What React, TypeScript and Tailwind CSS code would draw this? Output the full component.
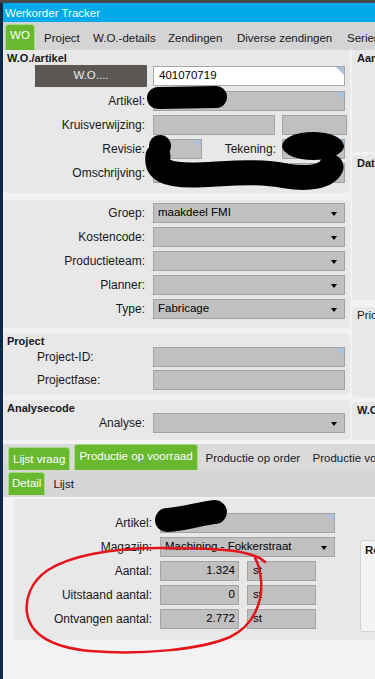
type BoxProps = {
  className?: string;
  value?: string;
  corner?: boolean;
  white?: boolean;
  right?: boolean;
};

function Box({ className = "", value, corner, white, right }: BoxProps) {
  return (
    <div
      className={`relative flex h-[20px] shrink-0 items-center overflow-hidden border ${
        white ? "border-[#a9a9a9] bg-white pl-[5px]" : "border-[#a3a3a3] bg-[#c0c0c0] pl-[5px]"
      } ${right ? "justify-end pr-[3px]" : ""} ${className}`}
    >
      {value && <span className="text-black">{value}</span>}
      {corner && (
        <span className="absolute right-0 top-0 h-0 w-0 border-l-[8px] border-t-[8px] border-l-transparent border-t-[#a9c1de]" />
      )}
    </div>
  );
}

function Select({ value, className = "" }: { value?: string; className?: string }) {
  return (
    <div
      className={`flex h-[20px] shrink-0 items-center justify-between border border-[#a3a3a3] bg-[#c0c0c0] pl-[4px] pr-[7px] ${className}`}
    >
      <span className="text-black">{value}</span>
      <span className="mt-[2px] h-0 w-0 border-x-[3px] border-t-[4px] border-x-transparent border-t-black" />
    </div>
  );
}

function Row({
  label,
  left,
  labelWidth = "w-[150px]",
  children,
}: {
  label: string;
  left?: boolean;
  labelWidth?: string;
  children: React.ReactNode;
}) {
  return (
    <div className="flex h-[20px] items-center">
      <div
        className={`${labelWidth} shrink-0 text-[12px] ${left ? "pl-[34px] text-left" : "pr-[8px] text-right"}`}
      >
        {label}
      </div>
      {children}
    </div>
  );
}

function SidePanel({ title, height, bold = true }: { title: string; height: string; bold?: boolean }) {
  return (
    <div className={`${height} shrink-0 overflow-hidden rounded-[4px] bg-[#e8e8e8] pl-[5px] pt-[3px]`}>
      <span className={bold ? "text-[11px] font-bold" : ""}>{title}</span>
    </div>
  );
}

export default function App() {
  return (
    <div className="relative h-[679px] w-[375px] overflow-hidden bg-[#46494c] pt-[3px] font-['Liberation_Sans',Arial,sans-serif] text-[11.5px] leading-none text-[#17171f]">
      <div className="flex h-full flex-col border-l-[3px] border-[#0c2a45] bg-[#f2f2f4]">
        {/* title bar */}
        <div className="flex h-[19px] shrink-0 items-center bg-[#00a9ea] pl-[2px] pt-[2px] text-white">
          Werkorder Tracker
        </div>

        {/* main tabs */}
        <div className="flex h-[28px] shrink-0 items-end overflow-hidden whitespace-nowrap bg-[#d4d4d4] pl-[2px]">
          <div className="flex h-[26px] w-[30px] shrink-0 items-center justify-center rounded-t-[4px] border border-b-0 border-[#a6d98a] bg-[#68b92e] pb-[3px] text-white">
            WO
          </div>
          <div className="ml-[9px] flex h-[26px] w-[49px] shrink-0 items-center pt-[3px]">Project</div>
          <div className="flex h-[26px] w-[75px] shrink-0 items-center pt-[3px]">W.O.-details</div>
          <div className="flex h-[26px] w-[69px] shrink-0 items-center pt-[3px]">Zendingen</div>
          <div className="flex h-[26px] w-[110px] shrink-0 items-center pt-[3px]">Diverse zendingen</div>
          <div className="flex h-[26px] shrink-0 items-center pt-[3px]">Serienummers</div>
        </div>

        {/* upper section */}
        <div className="flex shrink-0 gap-[2px] whitespace-nowrap">
          <div className="flex w-[347px] shrink-0 flex-col">
            {/* W.O./artikel */}
            <div className="h-[143px] rounded-[4px] bg-[#e8e8e8] pt-[2px]">
              <div className="h-[13px] pl-[4px] pt-[1px] text-[11px] font-bold">W.O./artikel</div>
              <div className="flex flex-col gap-[4px]">
                <div className="flex h-[22px] items-center">
                  <div className="ml-[32px] flex h-[22px] w-[112px] items-center justify-center bg-[#5a5755] text-[#ececec]">
                    W.O....
                  </div>
                  <Box white corner value="401070719" className="ml-[6px] w-[192px]" />
                </div>
                <Row label="Artikel:">
                  <Box corner className="w-[192px]" />
                </Row>
                <Row label="Kruisverwijzing:">
                  <Box className="w-[122px]" />
                  <Box className="ml-[7px] w-[65px]" />
                </Row>
                <Row label="Revisie:">
                  <Box corner className="w-[49px]" />
                  <div className="w-[80px] pr-[6px] text-right text-[12px]">Tekening:</div>
                  <Box corner className="w-[63px]" />
                </Row>
                <Row label="Omschrijving:">
                  <Box corner className="w-[192px]" />
                </Row>
              </div>
            </div>

            {/* Groep etc */}
            <div className="mt-[7px] flex h-[128px] flex-col gap-[4px] rounded-[4px] bg-[#e8e8e8] pt-[3px]">
              <Row label="Groep:">
                <Select value="maakdeel FMI" className="w-[192px]" />
              </Row>
              <Row label="Kostencode:">
                <Select className="w-[192px]" />
              </Row>
              <Row label="Productieteam:">
                <Select className="w-[192px]" />
              </Row>
              <Row label="Planner:">
                <Select className="w-[192px]" />
              </Row>
              <Row label="Type:">
                <Select value="Fabricage" className="w-[192px]" />
              </Row>
            </div>

            {/* Project */}
            <div className="mt-[5px] flex h-[62px] flex-col rounded-[4px] bg-[#e8e8e8] pt-[1px]">
              <div className="h-[13px] pl-[4px] pt-[2px] text-[11px] font-bold">Project</div>
              <div className="flex flex-col gap-[3px]">
                <Row label="Project-ID:" left>
                  <Box corner className="w-[192px]" />
                </Row>
                <Row label="Projectfase:" left>
                  <Box className="w-[192px]" />
                </Row>
              </div>
            </div>

            {/* Analysecode */}
            <div className="mt-[5px] flex h-[40px] flex-col rounded-[4px] bg-[#e8e8e8] pt-[3px]">
              <div className="h-[10px] pl-[4px] text-[11px] font-bold">Analysecode</div>
              <Row label="Analyse:">
                <Select className="w-[192px]" />
              </Row>
            </div>
          </div>

          <div className="flex w-[60px] shrink-0 flex-col">
            <SidePanel title="Aantallen" height="h-[102px]" />
            <div className="mt-[3px]">
              <SidePanel title="Datums" height="h-[145px]" />
            </div>
            <div className="mt-[7px]">
              <SidePanel title="Prioriteit" height="h-[90px]" bold={false} />
            </div>
            <div className="mt-[5px]">
              <SidePanel title="W.O.-status" height="h-[38px]" />
            </div>
          </div>
        </div>

        {/* lower tabs */}
        <div className="mt-[4px] flex h-[26px] shrink-0 items-end overflow-hidden whitespace-nowrap bg-[#dadada] pl-[5px]">
          <div className="flex h-[23px] shrink-0 items-center rounded-t-[3px] border border-b-0 border-[#a6d98a] bg-[#68b92e] px-[4px] pt-[1px] text-white">
            Lijst vraag
          </div>
          <div className="ml-[4px] flex h-[26px] shrink-0 items-center rounded-t-[3px] border border-b-0 border-[#a6d98a] bg-[#68b92e] px-[4px] pb-[2px] text-white">
            Productie op voorraad
          </div>
          <div className="ml-[8px] flex h-[24px] w-[107px] shrink-0 items-center pt-[1px]">Productie op order</div>
          <div className="flex h-[24px] shrink-0 items-center pt-[1px]">Productie voorraad</div>
        </div>

        <div className="flex h-[27px] shrink-0 items-end whitespace-nowrap bg-[#d6d6d6] pb-[2px] pl-[5px]">
          <div className="flex h-[23px] shrink-0 items-center rounded-t-[3px] border border-b-0 border-[#a6d98a] bg-[#68b92e] px-[3px] text-white">
            Detail
          </div>
          <div className="ml-[8px] flex h-[23px] items-center pt-[2px]">Lijst</div>
        </div>

        {/* detail content */}
        <div className="ml-[11px] mt-[2px] flex h-[141px] shrink-0 whitespace-nowrap rounded-bl-[4px] rounded-tl-[4px] bg-[#e8e8e8]">
          <div className="flex w-[346px] shrink-0 flex-col gap-[4px] pt-[14px]">
            <Row label="Artikel:" labelWidth="w-[146px]">
              <Box corner className="w-[175px]" />
            </Row>
            <Row label="Magazijn:" labelWidth="w-[146px]">
              <Select value="Machining - Fokkerstraat" className="w-[175px]" />
            </Row>
            <Row label="Aantal:" labelWidth="w-[146px]">
              <Box right value="1.324" className="w-[79px]" />
              <Box value="st" className="ml-[8px] w-[69px]" />
            </Row>
            <Row label="Uitstaand aantal:" labelWidth="w-[146px]">
              <Box right value="0" className="w-[79px]" />
              <Box value="st" className="ml-[8px] w-[69px]" />
            </Row>
            <Row label="Ontvangen aantal:" labelWidth="w-[146px]">
              <Box right value="2.772" className="w-[79px]" />
              <Box value="st" className="ml-[8px] w-[69px]" />
            </Row>
          </div>
          <div className="mt-[41px] h-[92px] w-[60px] shrink-0 overflow-hidden rounded-[3px] border border-[#d2d2d2] bg-[#f4f4f4] pl-[4px] pt-[4px] font-bold">
            Reserveringen
          </div>
        </div>
      </div>

      {/* redactions and annotation drawn over the screenshot */}
      <svg
        className="pointer-events-none absolute inset-0"
        width="375"
        height="679"
        viewBox="0 0 375 679"
        fill="none"
        strokeLinecap="round"
        strokeLinejoin="round"
      >
        <path d="M158 98 L216 97" stroke="#000" strokeWidth="22" />
        <circle cx="160" cy="146" r="11" fill="#000" />
        <path
          d="M158 156 C156 170 166 175 192 175 C226 174 256 170 286 176 C309 180 327 176 331 167"
          stroke="#000"
          strokeWidth="25"
        />
        <ellipse cx="313" cy="146" rx="31" ry="14" fill="#000" />
        <path d="M167 520 C186 519 202 513 215 512" stroke="#000" strokeWidth="24" />
        <path
          d="M265 562 C252 550 220 548 160 548 C110 548 70 556 48 570 C30 582 25 600 27 613 C30 633 50 647 90 651 C140 655 200 650 230 637 C255 625 263 600 261 580 C260 570 258 563 255 558"
          stroke="#e5141b"
          strokeWidth="2.5"
        />
      </svg>
    </div>
  );
}
